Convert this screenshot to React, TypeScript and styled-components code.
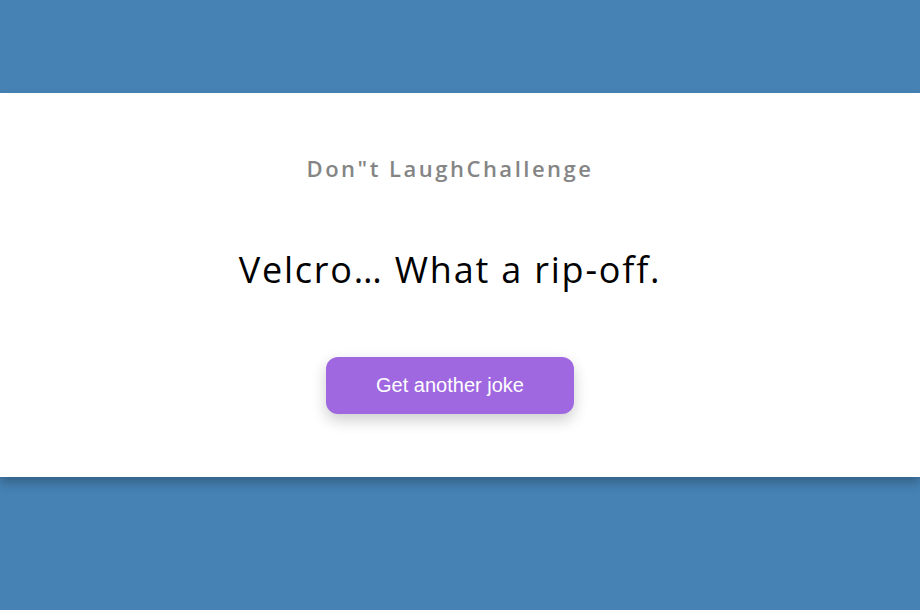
import React from "react";
import styled, { createGlobalStyle } from "styled-components";

const Global = createGlobalStyle`
  * { box-sizing: border-box; }
  html, body { margin: 0; padding: 0; }
  body {
    background: #4682b4;
    font-family: "Open Sans", "Noto Sans", sans-serif;
  }
`;

const Page = styled.main`
  min-height: 610px;
  display: flex;
  flex-direction: column;
  justify-content: flex-start;
  padding-top: 93px;
`;

const Card = styled.section`
  background: #ffffff;
  width: 100%;
  padding: 60px 40px 63px 20px;
  display: flex;
  flex-direction: column;
  align-items: center;
  box-shadow: 0 6px 10px rgba(0, 0, 0, 0.25);
  text-align: center;
`;

const Title = styled.h3`
  margin: 0;
  font-size: 22px;
  line-height: 30px;
  font-weight: 600;
  letter-spacing: 2.5px;
  color: #858585;
`;

const Joke = styled.p`
  margin: 65px 0;
  font-size: 36px;
  line-height: 44px;
  font-weight: 400;
  letter-spacing: 1.8px;
  color: #000;
`;

const Button = styled.button`
  width: 248px;
  height: 57px;
  border: 0;
  border-radius: 12px;
  background: #9f68e0;
  color: #fff;
  font-family: "Liberation Sans", Arial, sans-serif;
  font-size: 20px;
  box-shadow: 0 6px 15px rgba(0, 0, 0, 0.2);
  cursor: pointer;
`;

export default function App() {
  return (
    <>
      <Global />
      <Page>
        <Card>
          <Title>Don"t LaughChallenge</Title>
          <Joke>Velcro… What a rip-off.</Joke>
          <Button>Get another joke</Button>
        </Card>
      </Page>
    </>
  );
}
